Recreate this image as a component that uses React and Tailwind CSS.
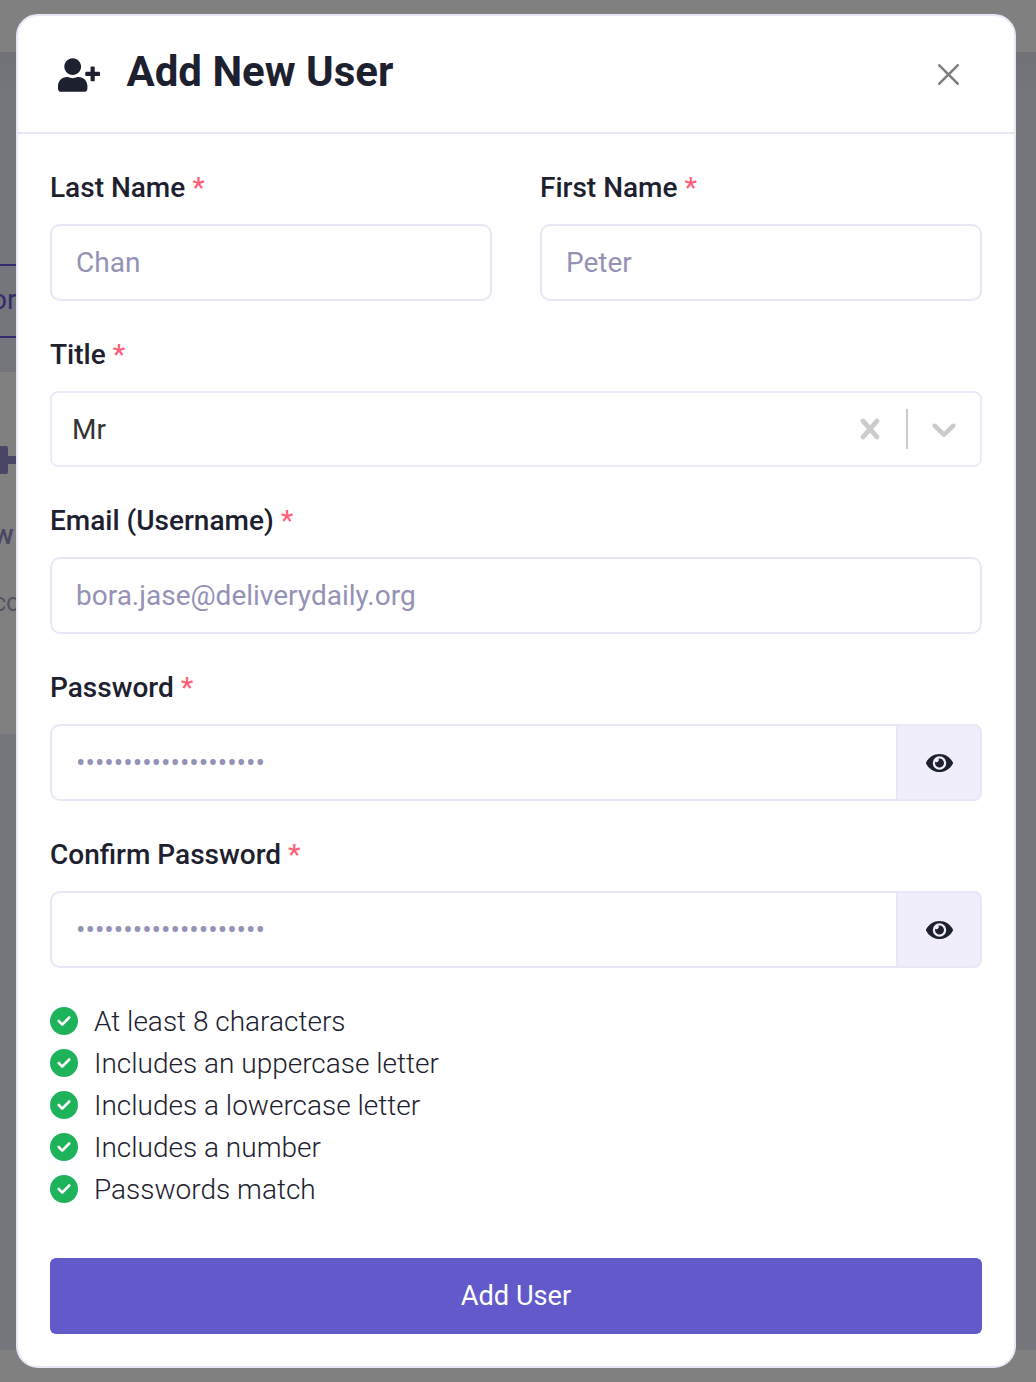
import React, { useState } from 'react';
import { FaUserPlus, FaEye } from 'react-icons/fa';
import { FaCircleCheck } from 'react-icons/fa6';

const RULES = [
  'At least 8 characters',
  'Includes an uppercase letter',
  'Includes a lowercase letter',
  'Includes a number',
  'Passwords match',
];

const inputClass =
  'block w-full h-[77px] rounded-[10px] border-2 border-[#e9e7f6] bg-white px-6 text-[28px] text-[#1f2330] placeholder:text-[#9492b6] outline-none';

function Field({ label, children }) {
  return (
    <div>
      <label className="block mb-3.5 text-[28px] leading-[44px] font-medium text-[#1d212f]">
        {label} <span className="text-[#ff6079]">*</span>
      </label>
      {children}
    </div>
  );
}

function PasswordInput() {
  const [visible, setVisible] = useState(false);

  return (
    <div className="flex h-[77px]">
      <input
        type={visible ? 'text' : 'password'}
        placeholder="••••••••••••••••••••"
        className="min-w-0 flex-1 rounded-l-[10px] border-2 border-r-0 border-[#e9e7f6] bg-white px-6 text-[28px] text-[#1f2330] placeholder:text-[#9492b6] outline-none"
      />
      <button
        type="button"
        onClick={() => setVisible(!visible)}
        className="flex w-[86px] items-center justify-center rounded-r-[8px] border-2 border-[#e9e7f6] bg-[#f0eefa] pt-px text-[#1d212f]"
        aria-label="Toggle password"
      >
        <FaEye className="h-6 w-[27px]" />
      </button>
    </div>
  );
}

function TitleSelect() {
  return (
    <div className="flex h-[76px] items-center rounded-[8px] border-2 border-[#e9ecf8] bg-white">
      <span className="flex-1 pt-0.5 pl-5 text-[28px] text-[#333333]">Mr</span>
      <button type="button" className="px-4 text-[#cccccc]" aria-label="Clear">
        <svg className="h-10 w-10" viewBox="0 0 20 20" fill="currentColor">
          <path d="M14.348 14.849c-0.469 0.469-1.229 0.469-1.697 0l-2.651-3.030-2.651 3.029c-0.469 0.469-1.229 0.469-1.697 0-0.469-0.469-0.469-1.229 0-1.697l2.758-3.15-2.759-3.152c-0.469-0.469-0.469-1.228 0-1.697s1.228-0.469 1.697 0l2.652 3.031 2.651-3.031c0.469-0.469 1.228-0.469 1.697 0s0.469 1.229 0 1.697l-2.758 3.152 2.758 3.15c0.469 0.469 0.469 1.229 0 1.698z" />
        </svg>
      </button>
      <span className="h-10 w-0.5 bg-[#cccccc]" />
      <button type="button" className="px-4 text-[#cccccc]" aria-label="Open">
        <svg className="h-10 w-10" viewBox="0 0 20 20" fill="currentColor">
          <path d="M4.516 7.548c0.436-0.446 1.043-0.481 1.576 0l3.908 3.747 3.908-3.747c0.533-0.481 1.141-0.446 1.574 0 0.436 0.445 0.408 1.197 0 1.615-0.406 0.418-4.695 4.502-4.695 4.502-0.217 0.223-0.502 0.335-0.787 0.335s-0.57-0.112-0.789-0.335c0 0-4.287-4.084-4.695-4.502s-0.436-1.17 0-1.615z" />
        </svg>
      </button>
    </div>
  );
}

// Dimmed page that stays visible around the dialog
function PageBehind() {
  return (
    <div className="flex h-full flex-col bg-[#75767b]" aria-hidden="true">
      <div className="h-[52px] bg-[#808080]" />
      <div className="h-[212px] bg-linear-to-b from-[#717277] to-[#75767b] to-20%" />
      <div className="flex h-[74px] w-[120px] items-center border-y-2 border-[#322c6b] pb-0.5">
        <span className="-ml-[9px] text-[28px] text-[#322c6b]">or</span>
      </div>
      <div className="mt-[34px] h-[362px] w-[120px] bg-[#808080]">
        <div className="flex h-[176px] items-center">
          <svg className="h-7 w-[26px]" viewBox="0 0 26 28" fill="#4a4766">
            <rect x="-2" y="0" width="10" height="28" rx="2" />
            <rect x="0" y="10" width="26" height="8" />
          </svg>
        </div>
        <p className="-mt-[34px] -ml-[7px] text-[28px] leading-[42px] font-medium text-[#4a4766]">w</p>
        <p className="mt-[29px] -ml-[7px] text-[25px] leading-[36px] text-[#55535f]">co</p>
      </div>
      <div className="mt-auto h-8 bg-[#808080]" />
    </div>
  );
}

export default function App() {
  return (
    <div className="relative h-[1382px] w-[1036px] overflow-hidden font-[Roboto,sans-serif]">
      <PageBehind />

      <div className="absolute inset-0 px-4 pt-[14px] pr-5">
        <div
          className="h-[1354px] rounded-[22px] border-2 border-[#e9e7f6] bg-white"
          role="dialog"
          aria-label="Add New User"
        >
          {/* Header */}
          <div className="flex h-[118px] items-center border-b-2 border-[#e9e7f6] pr-[55px] pl-10">
            <FaUserPlus className="mt-0.5 h-[34px] w-[42px] text-[#1d212f]" />
            <h1 className="ml-[26.5px] flex-1 pb-1 text-[42px] leading-[50px] font-bold text-[#1d212f]">
              Add New User
            </h1>
            <button type="button" className="opacity-50" aria-label="Close">
              <svg className="h-[21px] w-[21px]" viewBox="0 0 16 16" fill="#000">
                <path d="M.293.293a1 1 0 0 1 1.414 0L8 6.586 14.293.293a1 1 0 1 1 1.414 1.414L9.414 8l6.293 6.293a1 1 0 0 1-1.414 1.414L8 9.414l-6.293 6.293a1 1 0 0 1-1.414-1.414L6.586 8 .293 1.707a1 1 0 0 1 0-1.414z" />
              </svg>
            </button>
          </div>

          {/* Form */}
          <form className="px-8 pt-8" onSubmit={(e) => e.preventDefault()}>
            <div className="flex flex-col gap-8">
              <div className="grid grid-cols-2 gap-12">
                <Field label="Last Name">
                  <input className={inputClass} placeholder="Chan" />
                </Field>
                <Field label="First Name">
                  <input className={inputClass} placeholder="Peter" />
                </Field>
              </div>
              <Field label="Title">
                <TitleSelect />
              </Field>
              <Field label="Email (Username)">
                <input className={inputClass} placeholder="bora.jase@deliverydaily.org" />
              </Field>
              <Field label="Password">
                <PasswordInput />
              </Field>
              <Field label="Confirm Password">
                <PasswordInput />
              </Field>
            </div>

            <ul className="mt-8 text-[28px] font-light text-[#1d212f]">
              {RULES.map((rule) => (
                <li key={rule} className="flex h-[42px] items-center gap-4">
                  <FaCircleCheck className="h-7 w-7 text-[#1eb35b]" />
                  <span className="pt-0.5 leading-[42px]">{rule}</span>
                </li>
              ))}
            </ul>

            <button
              type="submit"
              className="mt-12 h-[76px] w-full rounded-[6px] bg-[#6259ca] text-[27.2px] text-white"
            >
              Add User
            </button>
          </form>
        </div>
      </div>
    </div>
  );
}
